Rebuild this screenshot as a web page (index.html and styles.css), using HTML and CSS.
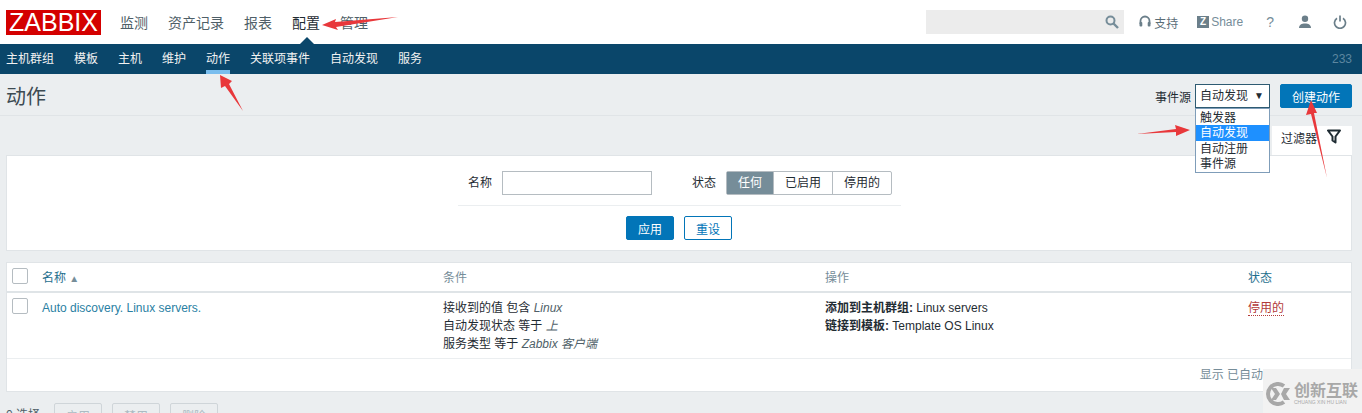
FILE: index.html
```html
<!DOCTYPE html>
<html lang="zh-CN">
<head>
  <meta charset="UTF-8" />
  <meta name="viewport" content="width=device-width, initial-scale=1.0"/>
  <title>动作 | Zabbix</title>
  <link rel="stylesheet" href="styles.css">
</head>
<body>
  <header class="topbar">
    <a href="#" class="logo">ZABBIX</a>
    <nav class="mainnav">
      <a href="#">监测</a>
      <a href="#">资产记录</a>
      <a href="#">报表</a>
      <a href="#" class="current">配置</a>
      <a href="#">管理</a>
    </nav>
    <div class="tools">
      <div class="search">
        <svg width="14" height="14" viewBox="0 0 14 14"><circle cx="5.500" cy="5.500" r="4" fill="none" stroke="#768d99" stroke-width="2"/><path d="M8.500 8.500L13 13" stroke="#768d99" stroke-width="2.400"/></svg>
      </div>
      <a href="#" class="tool tool-support">
        <svg width="12" height="14" viewBox="0 0 12 14"><path d="M1.500 9V6a4.500 4.500 0 0 1 9 0v3" fill="none" stroke="#6b7f8a" stroke-width="1.800"/><rect x="0.500" y="7" width="2.800" height="4.500" rx="1" fill="#6b7f8a"/><rect x="8.700" y="7" width="2.800" height="4.500" rx="1" fill="#6b7f8a"/></svg>
        支持
      </a>
      <a href="#" class="tool tool-share"><span class="z-badge">Z</span>Share</a>
      <a href="#" class="tool tool-help">?</a>
      <a href="#" class="tool tool-user">
        <svg width="14" height="14" viewBox="0 0 14 14"><circle cx="7" cy="3.800" r="3.200" fill="#6b7f8a"/><path d="M1 13c0-3.400 2.600-4.600 6-4.600s6 1.200 6 4.600z" fill="#6b7f8a"/></svg>
      </a>
      <a href="#" class="tool tool-power">
        <svg width="14" height="14" viewBox="0 0 14 14"><path d="M4 3.200a5.500 5.500 0 1 0 6 0" fill="none" stroke="#6b7f8a" stroke-width="1.700"/><path d="M7 0.500v6" stroke="#6b7f8a" stroke-width="1.700"/></svg>
      </a>
    </div>
  </header>

  <nav class="subnav">
    <a href="#">主机群组</a>
    <a href="#">模板</a>
    <a href="#">主机</a>
    <a href="#">维护</a>
    <a href="#" class="active">动作</a>
    <a href="#">关联项事件</a>
    <a href="#">自动发现</a>
    <a href="#">服务</a>
    <span class="server-name">233</span>
  </nav>

  <div class="title-bar">
    <h1>动作</h1>
    <div class="title-controls">
      <span>事件源</span>
      <div class="select-wrap">
        <div class="select">自动发现<span class="caret">▼</span></div>
        <ul class="select-list">
          <li>触发器</li>
          <li class="selected">自动发现</li>
          <li>自动注册</li>
          <li>事件源</li>
        </ul>
      </div>
      <button class="btn btn-create">创建动作</button>
    </div>
  </div>

  <div class="filter-tabs">
    <div class="filter-tab">
      过滤器
      <svg width="14" height="15" viewBox="0 0 14 15"><path d="M1 1.500h12L8.500 7.500v6l-3-2v-4z" fill="none" stroke="#1f2c33" stroke-width="2" stroke-linejoin="round"/></svg>
    </div>
  </div>

  <section class="filter">
    <div class="filter-row">
      <label class="field">名称 <input type="text" class="input"></label>
      <div class="field">
        状态
        <div class="segmented">
          <span class="on">任何</span>
          <span>已启用</span>
          <span>停用的</span>
        </div>
      </div>
    </div>
    <div class="filter-actions">
      <button class="btn">应用</button>
      <button class="btn btn-outline">重设</button>
    </div>
  </section>

  <section class="list">
    <table>
      <colgroup>
        <col class="col-check">
        <col class="col-name">
        <col class="col-cond">
        <col class="col-op">
        <col>
      </colgroup>
      <thead>
        <tr>
          <th><span class="checkbox"></span></th>
          <th><a href="#">名称</a> <span class="sort">▲</span></th>
          <th>条件</th>
          <th>操作</th>
          <th><a href="#">状态</a></th>
        </tr>
      </thead>
      <tbody>
        <tr>
          <td><span class="checkbox"></span></td>
          <td><a href="#" class="name-link">Auto discovery. Linux servers.</a></td>
          <td>
            接收到的值 包含 <em>Linux</em><br>
            自动发现状态 等于 <em>上</em><br>
            服务类型 等于 <em>Zabbix 客户端</em>
          </td>
          <td>
            <b>添加到主机群组:</b> Linux servers<br>
            <b>链接到模板:</b> Template OS Linux
          </td>
          <td><a href="#" class="status-off">停用的</a></td>
        </tr>
      </tbody>
    </table>
    <div class="list-footer">显示 已自动</div>
  </section>

  <div class="bulk">
    <span class="bulk-count">0 选择</span>
    <button class="btn-disabled">启用</button>
    <button class="btn-disabled">禁用</button>
    <button class="btn-disabled">删除</button>
  </div>

  <!-- red notes drawn over the screenshot -->
  <svg class="notes" width="1362" height="413" viewBox="0 0 1362 413">
    <polygon points="322,25 336,19 335,22 398,17 336,27 338,30"/>
    <polygon points="220,75 232,81 229,84 243,111 225,86 221,88"/>
    <polygon points="1190,130 1175,125 1176,129 1137,134 1176,132 1176,136"/>
    <polygon points="1311,100 1317,113 1314,113 1327,178 1311,114 1306,115"/>
  </svg>

  <div class="watermark">
    <svg width="27" height="24" viewBox="0 0 27 24"><path d="M20 4A10 10 0 1 0 20 20" fill="none" stroke="#a8a8a8" stroke-width="4"/><path d="M7 6h5l4 6-4 6H7l4-6z" fill="#a8a8a8"/><path d="M20 6h6l-4 6 4 6h-6l-3-6z" fill="#a8a8a8"/></svg>
    <div>
      <div class="wm-title">创新互联</div>
      <div class="wm-sub">CHUANG XIN HU LIAN</div>
    </div>
  </div>
</body>
</html>
```

FILE: styles.css
```css
html, body {
  height: 413px;
  overflow: hidden;
}

body {
  margin: 0;
  font-family: "Liberation Sans", "Noto Sans CJK SC", sans-serif;
  font-size: 12px;
  background-color: #ebeef0;
  color: #1f2c33;
}

a {
  text-decoration: none;
}

/* top bar */
.topbar {
  height: 44px;
  background-color: #fff;
  display: flex;
  align-items: center;
  padding: 0 15px 0 6px;
  box-sizing: border-box;
}

.logo {
  width: 95px;
  height: 25px;
  line-height: 25px;
  background-color: #d40000;
  color: #fff;
  font-size: 25px;
  text-align: center;
}

.mainnav {
  display: flex;
  gap: 20px;
  margin-left: 19px;
}

.mainnav a {
  font-size: 14px;
  color: #4f5f68;
}

.mainnav a.current {
  color: #1f2c33;
  position: relative;
}

.mainnav a.current::after {
  content: "";
  position: absolute;
  left: 7px;
  top: 25px;
  border: 8px solid transparent;
  border-top: 0;
  border-bottom-color: #0a466a;
}

.tools {
  margin-left: auto;
  display: flex;
  align-items: center;
}

.search {
  width: 198px;
  height: 24px;
  background-color: #ececec;
  display: flex;
  align-items: center;
  justify-content: flex-end;
  padding-right: 5px;
  box-sizing: border-box;
}

.tool {
  color: #768d99;
  display: flex;
  align-items: center;
}

.tool-support {
  margin-left: 15px;
  gap: 3px;
  color: #5b6d77;
}

.tool-share {
  margin-left: 19px;
}

.z-badge {
  width: 12px;
  height: 12px;
  line-height: 12px;
  background-color: #6b7f8a;
  color: #fff;
  font-size: 10px;
  font-weight: bold;
  text-align: center;
  margin-right: 2px;
}

.tool-help {
  margin-left: 23px;
  font-size: 14px;
}

.tool-user {
  margin-left: 24px;
}

.tool-power {
  margin-left: 21px;
}

/* second level menu */
.subnav {
  height: 30px;
  background-color: #0a466a;
  display: flex;
  gap: 20px;
  padding: 0 10px 0 6px;
}

.subnav a {
  color: #f2f2f2;
  line-height: 30px;
  box-sizing: border-box;
  height: 30px;
}

.subnav a.active {
  border-bottom: 4px solid #79bdee;
}

.server-name {
  margin-left: auto;
  line-height: 30px;
  color: #5d87a0;
}

/* page title */
.title-bar {
  height: 42px;
  box-sizing: border-box;
  border-bottom: 1px solid #e0e4e7;
  display: flex;
  align-items: center;
  justify-content: space-between;
  padding: 3px 10px 0 6px;
}

.title-bar h1 {
  margin: 0 0 2px;
  font-size: 20px;
  font-weight: normal;
  color: #3c4a52;
}

.title-controls {
  display: flex;
  align-items: center;
}

.select-wrap {
  position: relative;
  margin-left: 4px;
  margin-right: 10px;
}

.select {
  width: 75px;
  height: 24px;
  line-height: 22px;
  box-sizing: border-box;
  border: 1px solid #2e5b72;
  background-color: #fff;
  padding-left: 4px;
  position: relative;
}

.caret {
  position: absolute;
  right: 5px;
  top: 0;
  font-size: 10px;
}

.select-list {
  position: absolute;
  left: 0;
  top: 24px;
  width: 75px;
  box-sizing: border-box;
  margin: 0;
  padding: 0.5px 0 0;
  list-style: none;
  background-color: #fff;
  border: 1px solid #7f9db9;
  z-index: 5;
}

.select-list li {
  height: 15.5px;
  line-height: 16px;
  padding-left: 4px;
}

.select-list li.selected {
  background-color: #1e90ff;
  color: #fff;
}

.btn {
  height: 24px;
  padding: 0 11px;
  border: 1px solid #0275b8;
  border-radius: 2px;
  background-color: #0275b8;
  color: #fff;
  font-family: inherit;
  font-size: 12px;
}

.btn-create {
  width: 72px;
  padding: 0;
}

.btn-outline {
  background-color: #fff;
  color: #0275b8;
}

/* filter */
.filter-tabs {
  height: 39px;
  display: flex;
  justify-content: flex-end;
  padding-right: 10px;
}

.filter-tab {
  width: 80px;
  height: 29px;
  margin-top: 10px;
  box-sizing: border-box;
  background-color: #fff;
  display: flex;
  align-items: flex-start;
  justify-content: flex-end;
  gap: 10px;
  padding: 3px 11px 0 0;
}

.filter {
  margin: 0 10px 0 6px;
  height: 96px;
  box-sizing: border-box;
  background-color: #fff;
  border: 1px solid #e0e4e7;
  padding-top: 15px;
}

.filter-row {
  width: 443px;
  height: 35px;
  box-sizing: border-box;
  padding-left: 2px;
  margin: 0 auto;
  border-bottom: 1px solid #ebeef0;
  display: flex;
  justify-content: center;
  gap: 40px;
}

.field {
  display: flex;
  align-items: flex-start;
  gap: 10px;
  line-height: 24px;
}

.input {
  width: 150px;
  height: 24px;
  box-sizing: border-box;
  border: 1px solid #b5bcc1;
  background-color: #fff;
  margin: 0;
}

.segmented {
  display: flex;
  height: 24px;
  box-sizing: border-box;
  border: 1px solid #b5bcc1;
  line-height: 22px;
  border-radius: 2px;
}

.segmented span {
  width: 58px;
  text-align: center;
  border-left: 1px solid #b5bcc1;
}

.segmented span:first-child {
  width: 46px;
  border-left: 0;
}

.segmented .on {
  background-color: #768d99;
  color: #fff;
}

.filter-actions {
  display: flex;
  justify-content: center;
  gap: 10px;
  margin-top: 10px;
}

/* list */
.list {
  margin: 11px 10px 0 6px;
  background-color: #fff;
  border: 1px solid #e0e4e7;
  box-sizing: border-box;
  height: 130px;
}

table {
  width: 100%;
  table-layout: fixed;
  border-collapse: collapse;
}

.col-check {
  width: 35px;
}

.col-name {
  width: 401px;
}

.col-cond {
  width: 382px;
}

.col-op {
  width: 423px;
}

th {
  height: 26px;
  padding: 0 0 2px;
  text-align: left;
  font-weight: normal;
  color: #768d99;
  border-bottom: 2px solid #dfe4e7;
}

th a {
  color: #1f6f8e;
}

.sort {
  font-size: 10px;
  color: #768d99;
}

td {
  height: 66px;
  padding: 6px 0 0;
  box-sizing: border-box;
  vertical-align: top;
  line-height: 18px;
  border-bottom: 1px solid #ebeef0;
}

em {
  color: #4f5f68;
}

.checkbox {
  display: block;
  width: 16px;
  height: 16px;
  margin-left: 5px;
  box-sizing: border-box;
  border: 1px solid #b5bcc1;
  border-radius: 2px;
  background-color: #fff;
}

td .checkbox {
  margin-top: -1px;
}

.name-link {
  color: #2a7fa3;
}

.status-off {
  color: #b23a3a;
  border-bottom: 1px dotted #b23a3a;
}

.list-footer {
  display: flex;
  justify-content: flex-end;
  padding-right: 88px;
  line-height: 33px;
  color: #768d99;
}

/* bulk actions */
.bulk {
  display: flex;
  align-items: flex-start;
  gap: 10px;
  margin: 11px 0 0 6px;
}

.bulk-count {
  width: 38px;
  line-height: 24px;
  color: #4f5f68;
}

.btn-disabled {
  width: 48px;
  height: 24px;
  border: 1px solid #cfd5d9;
  border-radius: 2px;
  background-color: #ebeef0;
  color: #acbbc2;
  font-family: inherit;
  font-size: 12px;
}

/* overlays */
.notes {
  position: absolute;
  left: 0;
  top: 0;
  z-index: 10;
  pointer-events: none;
}

.notes polygon {
  fill: #e8383b;
}

.watermark {
  position: absolute;
  left: 1263px;
  top: 369px;
  width: 99px;
  height: 44px;
  background-color: #f2f2f2;
  display: flex;
  align-items: center;
  gap: 3px;
  padding: 6px 0 0 1px;
  box-sizing: border-box;
  z-index: 11;
  color: #a8a8a8;
}

.wm-title {
  font-size: 16px;
  font-weight: bold;
  line-height: 17px;
  white-space: nowrap;
}

.wm-sub {
  font-size: 5px;
  line-height: 7px;
  white-space: nowrap;
}
```
